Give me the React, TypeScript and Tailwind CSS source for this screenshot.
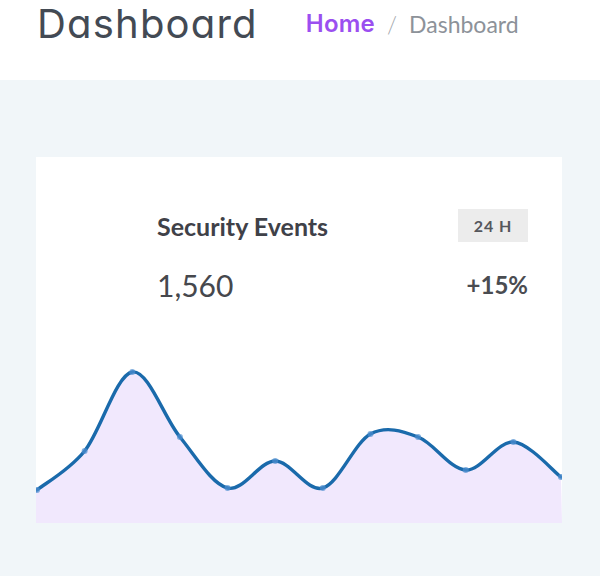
import React from 'react'

// chart points in card coords (card is 526 wide, chart box 183 tall)
const values = [150, 111, 32, 97, 148, 121, 148, 94, 97, 130, 102, 137]

function buildPath(pts: [number, number][]): string {
  // catmull-rom -> cubic bezier
  let d = `M${pts[0][0]},${pts[0][1]}`
  for (let i = 0; i < pts.length - 1; i++) {
    const p0 = pts[i - 1] || pts[i]
    const p1 = pts[i]
    const p2 = pts[i + 1]
    const p3 = pts[i + 2] || p2
    const c1x = p1[0] + (p2[0] - p0[0]) / 6
    const c1y = p1[1] + (p2[1] - p0[1]) / 6
    const c2x = p2[0] - (p3[0] - p1[0]) / 6
    const c2y = p2[1] - (p3[1] - p1[1]) / 6
    d += ` C${c1x},${c1y} ${c2x},${c2y} ${p2[0]},${p2[1]}`
  }
  return d
}

function EventsChart() {
  const w = 526
  const h = 183
  const step = (w - 2) / (values.length - 1)
  const pts = values.map((v, i) => [1 + i * step, v] as [number, number])
  const line = buildPath(pts)
  const area = `${line} L${w},${h} L0,${h} L0,${pts[0][1]} Z`

  return (
    <svg width={w} height={h} viewBox={`0 0 ${w} ${h}`} className="block">
      <path d={area} fill="#f1e8fd" />
      <path d={line} fill="none" stroke="#1a6aab" strokeWidth={3.4} strokeLinecap="round" />
      {pts.map(([x, y], i) => (
        <circle key={i} cx={x} cy={y} r={3} fill="#4f8fd0" fillOpacity={0.7} />
      ))}
    </svg>
  )
}

export default function App() {
  return (
    <div className="w-[600px] h-[576px] bg-[#f1f6f9] overflow-hidden font-['Lato',sans-serif]">
      {/* Page header */}
      <div className="h-[80px] bg-white flex items-start pl-[37px]">
        <h1 className="font-['Inter',sans-serif] [font-feature-settings:'cv11'_1] font-normal text-[40px] leading-[48px] tracking-[0.03em] text-[#434a54]">
          Dashboard
        </h1>
        <nav className="flex items-center ml-[48px] mt-[9px] text-[23px] leading-[30px]">
          <span className="font-['Inter',sans-serif] font-semibold text-[24px] text-[#9b4ff0] tracking-[0.01em]">Home</span>
          <span className="mx-[12px] text-[#a3a7ad] font-light">/</span>
          <span className="text-[#8d9299]">Dashboard</span>
        </nav>
      </div>

      {/* Card */}
      <div className="mt-[77px] ml-[36px] w-[526px] bg-white">
        <div className="pt-[52px] pl-[121px] pr-[34px]">
          <div className="flex items-center justify-between">
            <h2 className="text-[25px] leading-[30px] font-bold text-[#3f4148]">Security Events</h2>
            <span className="w-[70px] h-[33px] flex items-center justify-center bg-[#ececec] text-[16px] font-bold text-[#55575c] tracking-[0.06em]">
              24 H
            </span>
          </div>
          <div className="flex items-center justify-between mt-[25px] h-[36px]">
            <span className="text-[30px] text-[#46484d]">1,560</span>
            <span className="text-[24px] font-bold text-[#4a4c51]">+15%</span>
          </div>
        </div>
        <div className="mt-[37px]">
          <EventsChart />
        </div>
      </div>
    </div>
  )
}
